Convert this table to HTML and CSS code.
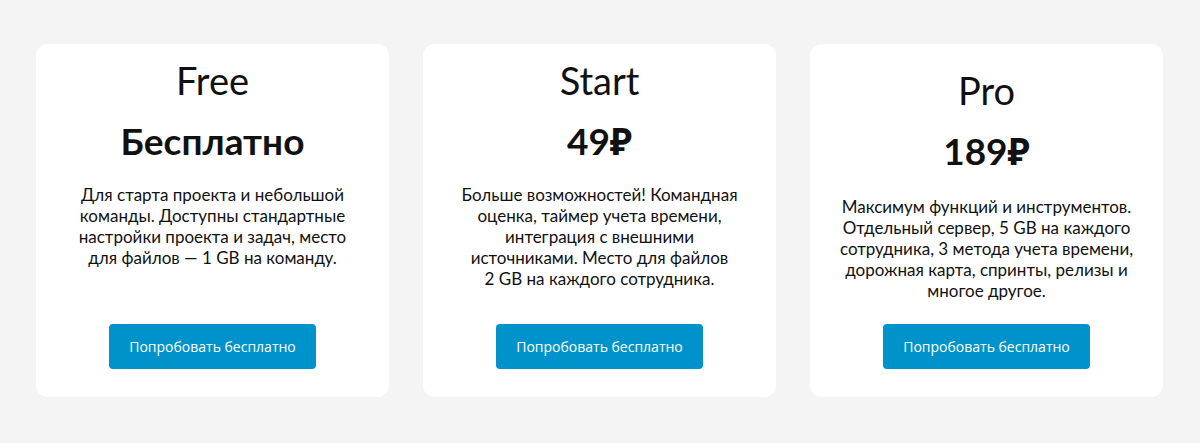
FILE: index.html
```html
<!DOCTYPE html>
<html lang="ru">
<head>
    <meta charset="UTF-8">
    <meta name="viewport" content="width=device-width, initial-scale=1.0">
    <title>Тарифы</title>
    <link rel="stylesheet" href="styles.css">
</head>
<body>
    <div class="plans">
        <div class="plan">
            <h2 class="plan-name">Free</h2>
            <div class="plan-price">Бесплатно</div>
            <p class="plan-text">Для старта проекта и небольшой команды. Доступны стандартные настройки проекта и задач, место для файлов — 1&nbsp;GB на команду.</p>
            <button class="plan-btn">Попробовать бесплатно</button>
        </div>

        <div class="plan">
            <h2 class="plan-name">Start</h2>
            <div class="plan-price">49₽</div>
            <p class="plan-text">Больше возможностей! Командная оценка, таймер учета времени, интеграция с внешними источниками. Место для файлов<br>2&nbsp;GB на каждого сотрудника.</p>
            <button class="plan-btn">Попробовать бесплатно</button>
        </div>

        <div class="plan plan-pro">
            <h2 class="plan-name">Pro</h2>
            <div class="plan-price">189₽</div>
            <p class="plan-text">Максимум функций и инструментов. Отдельный сервер, 5&nbsp;GB на каждого сотрудника, 3 метода учета времени, дорожная карта, спринты, релизы и многое другое.</p>
            <button class="plan-btn">Попробовать бесплатно</button>
        </div>
    </div>
</body>
</html>
```

FILE: styles.css
```css
body {
    margin: 0;
    background: #f4f4f4;
    font-family: Lato, "Noto Sans", sans-serif;
    color: #111;
}
.plans {
    display: flex;
    gap: 34px;
    padding: 44px 37px 0 36px;
}
.plan {
    box-sizing: border-box;
    width: 353px;
    height: 353px;
    background: #fff;
    border-radius: 12px;
    padding: 15px 28px 28px;
    display: flex;
    flex-direction: column;
    align-items: center;
    text-align: center;
}
.plan-pro {
    padding-top: 25px;
}
.plan-name {
    margin: 0;
    font-size: 38px;
    font-weight: 400;
    line-height: 43px;
}
.plan-price {
    margin-top: 17px;
    font-size: 37px;
    font-weight: 700;
    line-height: 43px;
}
.plan-text {
    margin: 22px 0 0;
    font-size: 17px;
    line-height: 21px;
}
.plan-pro .plan-text {
    margin-top: 24px;
}
.plan-btn {
    margin-top: auto;
    height: 45px;
    padding: 0 20px;
    border: none;
    border-radius: 4px;
    background: #0093cb;
    color: #fff;
    font-family: "Open Sans", sans-serif;
    font-size: 14px;
    cursor: pointer;
}
.plan-btn:hover {
    background: #0082b4;
}
```
